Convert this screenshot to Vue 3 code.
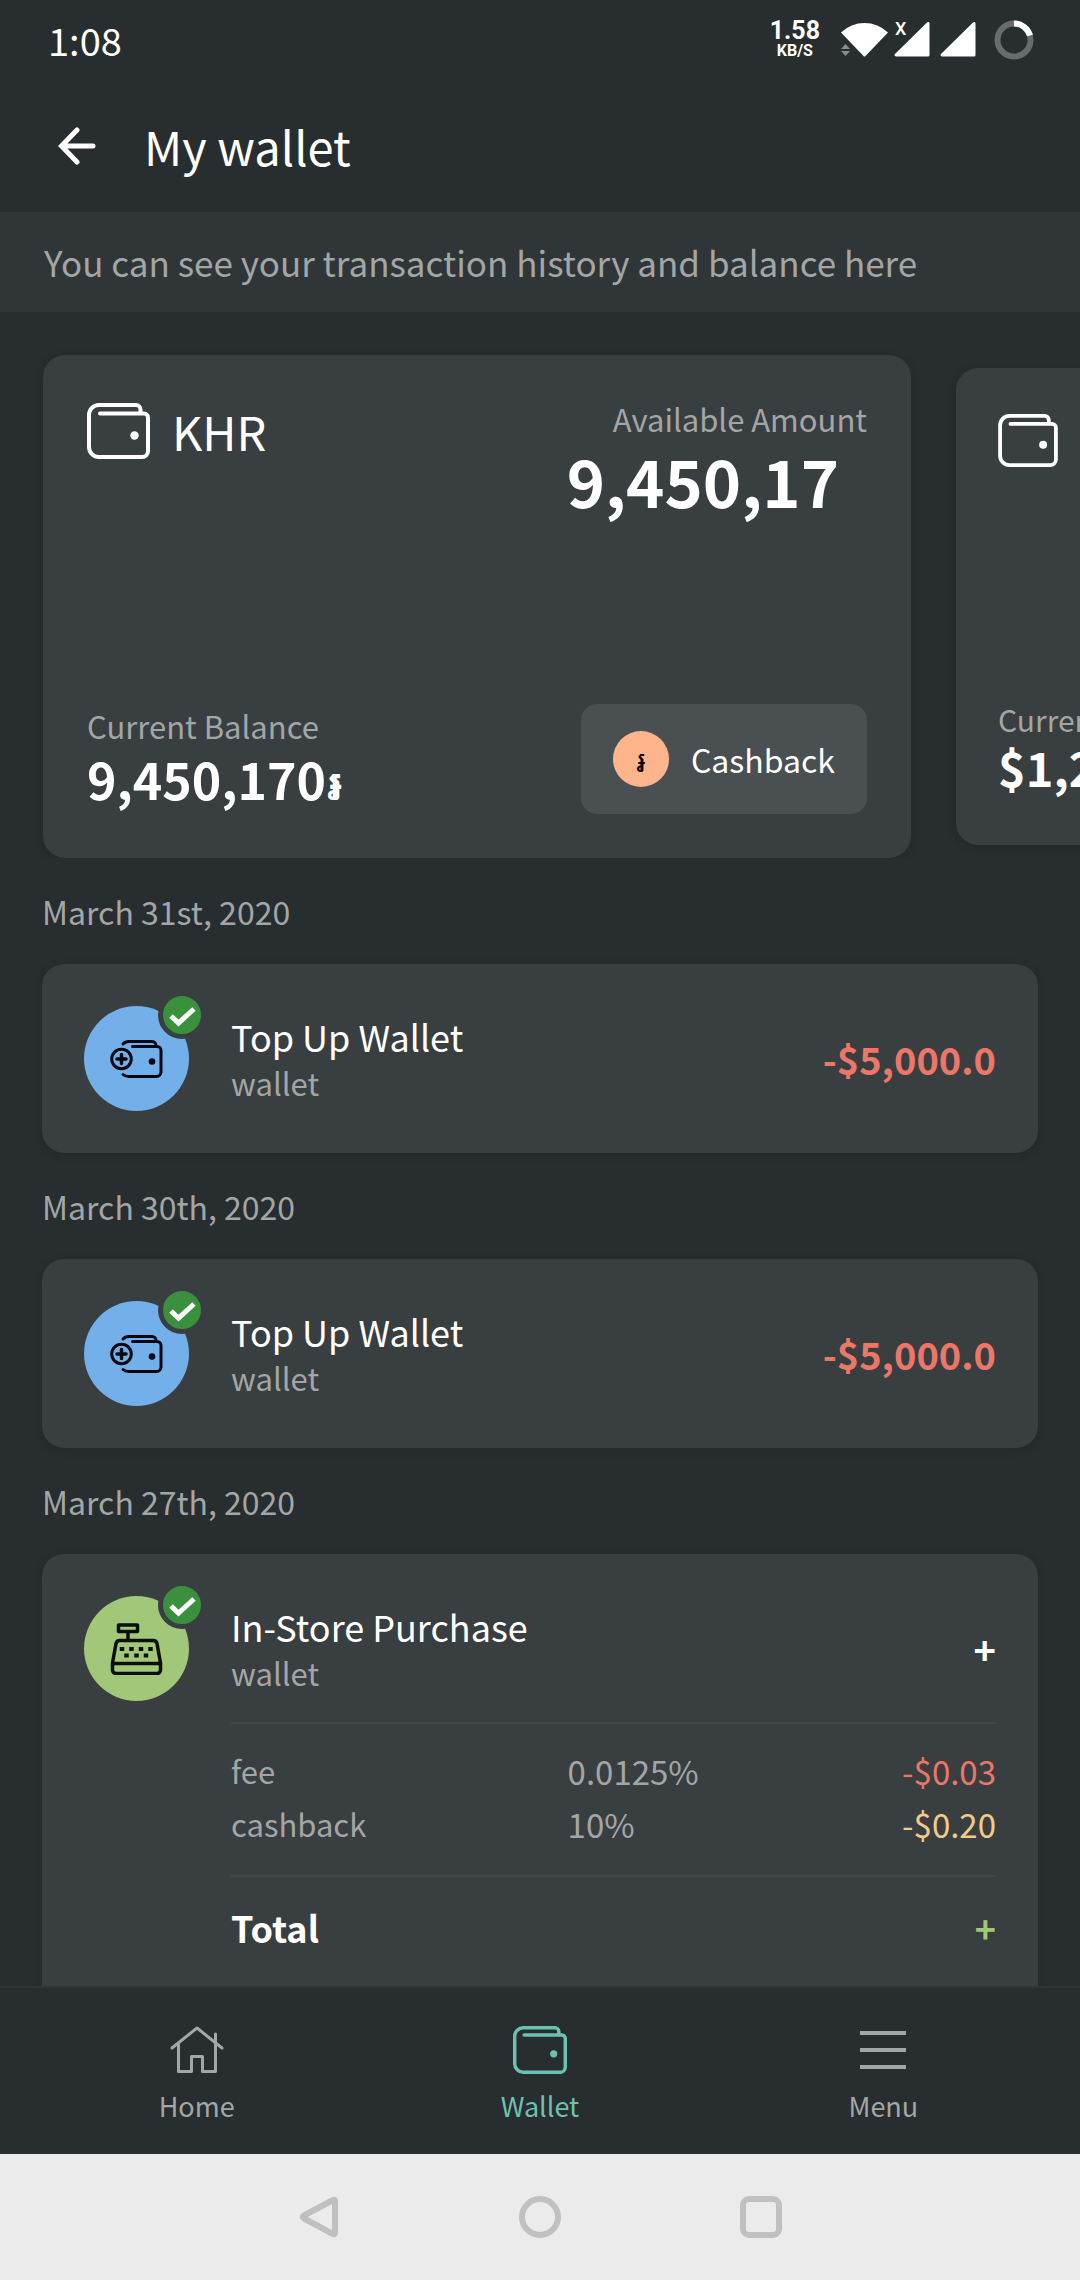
<script setup>
import { h } from 'vue'

const WalletIcon = () =>
  h('svg', { viewBox: '0 0 63 56', fill: 'none', stroke: 'currentColor', 'stroke-width': 4, 'stroke-linecap': 'round', 'aria-hidden': 'true' }, [
    h('path', { d: 'M13 10.5H57a4 4 0 0 1 4 4V48a6 6 0 0 1-6 6H12a10 10 0 0 1-10-10V12A10 10 0 0 1 12 2H49a4.500 4.500 0 0 1 4.500 4.500V9' }),
    h('circle', { cx: 47.5, cy: 32.5, r: 4.2, fill: 'currentColor', stroke: 'none' })
  ])

const topUps = [
  { date: 'March 31st, 2020', title: 'Top Up Wallet', source: 'wallet', amount: '-$5,000.0' },
  { date: 'March 30th, 2020', title: 'Top Up Wallet', source: 'wallet', amount: '-$5,000.0' }
]

const charges = [
  { name: 'fee', rate: '0.0125%', amount: '-$0.03', tone: 'debit' },
  { name: 'cashback', rate: '10%', amount: '-$0.20', tone: 'reward' }
]
</script>

<template>
  <div class="screen">
    <div class="status">
      <span class="clock">1:08</span>
      <div class="indicators">
        <div class="speed"><span class="rate">1.58</span><span class="unit">KB/S</span></div>
        <svg class="signals" viewBox="0 0 136 36" aria-hidden="true">
          <path d="M0 10.500Q10 1 23.500 1T47 10.500L24.500 34q-1 1-2 0Z" fill="#fff" />
          <path d="M0 27l4.500-5 4.500 5ZM0 29l4.500 5 4.500-5Z" fill="#8a8d8e" />
          <path d="M54 34q-1-1 0-2L86 .500q2-1.500 2.500.500V33q0 1.500-1.500 1.500H55Z" fill="#fff" />
          <path d="M100 34q-1-1 0-2L132 .500q2-1.500 2.500.500V33q0 1.500-1.500 1.500H101Z" fill="#fff" />
          <text x="54" y="13" class="nosim">X</text>
        </svg>
        <svg class="battery" viewBox="0 0 40 40" fill="none" stroke-width="6" aria-hidden="true">
          <circle cx="20" cy="20" r="16.500" stroke="#696c6d" />
          <path d="M20 3.500A16.500 16.500 0 0 1 36 15.500" stroke="#fff" />
        </svg>
      </div>
    </div>

    <header class="topbar">
      <button class="back" type="button" aria-label="Back">
        <svg viewBox="0 0 38 38" fill="none" stroke="currentColor" stroke-width="5" stroke-linecap="round" aria-hidden="true">
          <path d="M35 19H4M19 3L3.500 19L19 35" />
        </svg>
      </button>
      <h1>My wallet</h1>
    </header>

    <p class="banner">You can see your transaction history and balance here</p>

    <main>
      <section class="wallets">
        <article class="wallet">
          <div class="row">
            <div class="currency"><WalletIcon class="walleticon" /><span>KHR</span></div>
            <div class="available">
              <span class="label">Available Amount</span>
              <strong>9,450,17</strong>
            </div>
          </div>
          <div class="row">
            <div class="balance">
              <span class="label">Current Balance</span>
              <strong>9,450,170<span class="riel">៛</span></strong>
            </div>
            <button class="cashback" type="button"><span class="coin riel">៛</span>Cashback</button>
          </div>
        </article>
        <article class="wallet next">
          <WalletIcon class="walleticon" />
          <div class="balance">
            <span class="label">Current Balance</span>
            <strong>$1,2</strong>
          </div>
        </article>
      </section>

      <section class="history">
        <template v-for="item in topUps" :key="item.date">
          <h2>{{ item.date }}</h2>
          <article class="entry">
            <div class="avatar topup">
              <svg class="glyph" viewBox="0 0 53 52" fill="none" stroke="#030712" stroke-width="3" stroke-linecap="round" aria-hidden="true">
                <circle cx="11.500" cy="26" r="9.800" />
                <path d="M11.500 21.500V30.500M7 26H16" stroke-width="3.500" />
                <path d="M13 11Q15 8.500 19 8.500H42a4 4 0 0 1 4 4M22.500 13.500H47a4 4 0 0 1 4 4V39a4.500 4.500 0 0 1-4.500 4.500H19Q15 43.500 13 41.500" />
                <circle cx="42" cy="28.500" r="3.300" fill="#030712" stroke="none" />
              </svg>
              <span class="badge"><svg viewBox="0 0 38 38" fill="none" aria-hidden="true"><path d="M8 20L15.500 27L31 13" stroke="#fff" stroke-width="5" /></svg></span>
            </div>
            <div class="about"><span class="title">{{ item.title }}</span><span class="label">{{ item.source }}</span></div>
            <strong class="sum debit">{{ item.amount }}</strong>
          </article>
        </template>

        <h2>March 27th, 2020</h2>
        <article class="entry">
          <div class="avatar store">
            <svg class="glyph" viewBox="0 0 53 52" fill="none" stroke="#0b0f08" stroke-width="3.500" stroke-linejoin="round" aria-hidden="true">
              <path d="M8.500 2H27.500V8.500H8.500ZM18 9V17M10 17.500H43a4 4 0 0 1 4 3L50.500 40V47a3.500 3.500 0 0 1-3.500 3.500H6A3.500 3.500 0 0 1 2.500 47V40L6 20.500a4 4 0 0 1 4-3ZM2.500 40.500H50.500" />
              <path d="M12 24V28M21.500 24V28M31 24V28M40.500 24V28M16.500 30.500V34.500M26.500 30.500V34.500M36 30.500V34.500" stroke-width="4.500" />
            </svg>
            <span class="badge"><svg viewBox="0 0 38 38" fill="none" aria-hidden="true"><path d="M8 20L15.500 27L31 13" stroke="#fff" stroke-width="5" /></svg></span>
          </div>
          <div class="detail">
            <div class="head">
              <div class="about"><span class="title">In-Store Purchase</span><span class="label">wallet</span></div>
              <strong class="sum">+</strong>
            </div>
            <table>
              <tbody>
                <tr v-for="c in charges" :key="c.name">
                  <th scope="row">{{ c.name }}</th>
                  <td>{{ c.rate }}</td>
                  <td class="end" :class="c.tone">{{ c.amount }}</td>
                </tr>
              </tbody>
            </table>
            <div class="total"><strong>Total</strong><strong class="credit">+</strong></div>
          </div>
        </article>
      </section>
    </main>

    <nav class="tabs">
      <a href="#home">
        <svg viewBox="0 0 54 48" fill="none" stroke="currentColor" stroke-width="3" stroke-linecap="round" stroke-linejoin="round" aria-hidden="true">
          <path d="M2 22L27 2L52 22M8.500 17V45.500H21.500V30.500H32.500V45.500H45.500V8" />
        </svg>
        Home
      </a>
      <a href="#wallet" class="active"><WalletIcon />Wallet</a>
      <a href="#menu">
        <svg viewBox="0 0 54 48" fill="none" stroke="currentColor" stroke-width="4" aria-hidden="true">
          <path d="M4 7H50M4 24H50M4 41H50" />
        </svg>
        Menu
      </a>
    </nav>

    <div class="system">
      <button type="button" aria-label="System back"><svg viewBox="0 0 42 42"><path d="M37 5V37Q37 39 35 38L6 22.500Q3.500 21 6 19.500L35 4Q37 3 37 5Z" /></svg></button>
      <button type="button" aria-label="System home"><svg viewBox="0 0 42 42"><circle cx="21" cy="21" r="18" /></svg></button>
      <button type="button" aria-label="Recent apps"><svg viewBox="0 0 42 42"><rect x="3" y="3" width="36" height="36" rx="6" /></svg></button>
    </div>
  </div>
</template>

<style>
body { margin: 0; background: #282d2f; }
</style>

<style scoped>
* { box-sizing: border-box; }
.screen {
  display: flex;
  flex-direction: column;
  height: 100vh;
  overflow: hidden;
  background: #282d2f;
  color: #fff;
  font-family: "Noto Sans CJK SC", "Noto Sans", sans-serif;
  font-size: 32px;
  line-height: 44px;
}
button { border: 0; padding: 0; background: none; color: inherit; font: inherit; }
svg { display: block; }
h1, h2, p { margin: 0; font-weight: 400; }

.status { display: flex; justify-content: space-between; align-items: center; height: 79px; padding: 0 46px 0 48px; flex: none; }
.clock { font-size: 38px; }
.indicators { display: flex; align-items: center; }
.speed { display: flex; flex-direction: column; align-items: center; font-family: Roboto, sans-serif; font-weight: 700; margin-right: 21px; }
.rate { font-size: 25px; line-height: 22px; }
.unit { font-size: 16px; line-height: 18px; }
.signals { width: 136px; height: 36px; margin-right: 17px; }
.nosim { fill: #fff; font: 500 18px Roboto, sans-serif; }
.battery { width: 40px; height: 40px; }

.topbar { display: flex; align-items: center; gap: 48px; height: 133px; padding: 0 58px; flex: none; }
.back, .back svg { width: 38px; height: 38px; }
h1 { font-size: 47px; line-height: 64px; }
.banner { flex: none; padding: 24px 44px; background: #303537; color: #a3a6a7; font-size: 35px; line-height: 52px; }

main { flex: 1; min-height: 0; overflow: hidden; }
.wallets { display: flex; align-items: center; gap: 45px; padding: 43px 0 0 43px; overflow: hidden; }
.wallet { flex: none; display: flex; flex-direction: column; justify-content: space-between; width: calc(100vw - 212px); min-height: 503px; padding: 42px 44px 44px; border-radius: 22px; background: #393e40; box-shadow: 0 2px 6px #23282a; }
.wallet.next { min-height: 477px; padding: 46px 42px 50px; }
.row { display: flex; justify-content: space-between; align-items: flex-start; }
.currency { display: flex; align-items: center; gap: 22px; height: 68px; font-size: 47px; }
.walleticon { width: 63px; height: 56px; }
.label { color: #a3a6a7; font-size: 31px; }
.available { display: flex; flex-direction: column; align-items: flex-end; }
.available strong { padding-right: 28px; font-size: 65px; line-height: 78px; }
.balance { display: flex; flex-direction: column; }
.balance strong { font-size: 50px; line-height: 60px; }
.riel { font-family: "Noto Sans CJK SC", "Noto Sans Khmer", "DejaVu Sans", sans-serif; font-size: 44px; line-height: 44px; }
.next .walleticon { width: 60px; height: 53px; }
.next .label { font-size: 30px; line-height: 40px; }
.next .balance strong { font-size: 47px; line-height: 56px; }
.cashback { display: flex; align-items: center; gap: 22px; height: 110px; padding: 0 32px; border-radius: 16px; background: #4a4f51; }
.coin { display: grid; place-items: center; width: 56px; height: 56px; border-radius: 50%; background: #ffb58b; color: #000; font-size: 31px; }

.history { padding: 0 42px; }
h2 { padding: 31px 0; color: #a3a6a7; font-size: 32px; line-height: 44px; }
.entry { display: flex; align-items: flex-start; gap: 42px; padding: 42px; border-radius: 22px; background: #393e40; box-shadow: 0 2px 6px #23282a; }
.avatar { position: relative; flex: none; display: grid; place-items: center; width: 105px; height: 105px; border-radius: 50%; }
.topup { background: #73b0ea; }
.store { background: #a0c878; }
.glyph { width: 53px; height: 52px; }
.badge { position: absolute; top: -15px; right: -17px; width: 48px; height: 48px; border: 5px solid #393e40; border-radius: 50%; background: #3a903d; }
.about { flex: 1; display: flex; flex-direction: column; justify-content: center; height: 105px; }
.title { font-size: 36px; line-height: 48px; }
.about .label { line-height: 46px; }
.sum { font-size: 38px; line-height: 105px; }
.debit { color: #ec7768; }
.reward { color: #f2cb8b; }
.credit { color: #a0c878; }
.detail { flex: 1; }
.head { display: flex; padding-bottom: 21px; border-bottom: 2px solid #42474a; }
table { width: 100%; margin: 20px 0 25px; border-collapse: collapse; table-layout: fixed; color: #a3a6a7; }
th, td { height: 53px; padding: 0; text-align: left; font-size: 33px; font-weight: 400; }
th { width: 44%; font-size: 31px; }
.end { text-align: right; }
td.debit { color: #ec7768; }
td.reward { color: #f2cb8b; }
.total { display: flex; justify-content: space-between; border-top: 2px solid #42474a; font-size: 36px; line-height: 100px; }

.tabs { flex: none; display: grid; grid-template-columns: repeat(3, 1fr); padding: 38px 25px 28px; border-top: 2px solid #303537; background: #282d2f; }
.tabs a { display: flex; flex-direction: column; align-items: center; gap: 12px; color: #a3a6a7; font-size: 27px; line-height: 40px; text-decoration: none; }
.tabs a.active { color: #6cc2b0; }
.tabs svg { width: 54px; height: 48px; }

.system { flex: none; display: flex; justify-content: center; align-items: center; gap: 179px; height: 126px; background: #ebebeb; }
.system svg { width: 42px; height: 42px; fill: none; stroke: #c0c0c0; stroke-width: 6; stroke-linejoin: round; }
</style>
